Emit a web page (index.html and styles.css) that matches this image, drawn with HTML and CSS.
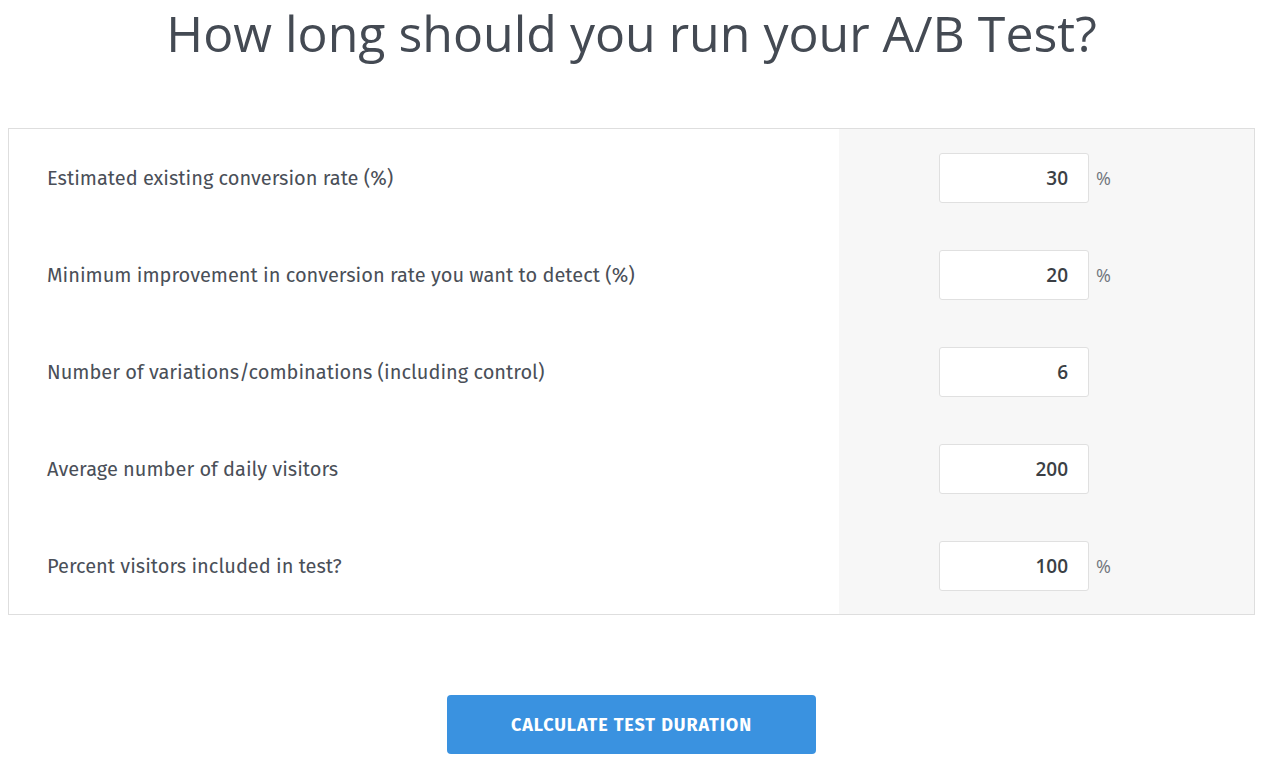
FILE: index.html
```html
<!DOCTYPE html>
<html>
<head>
<meta charset="utf-8">
<link rel="stylesheet" href="styles.css">
</head>
<body>
<h1 class="title">How long should you run your A/B Test?</h1>
<div class="calc">
  <div class="row">
    <div class="label">Estimated existing conversion rate (%)</div>
    <div class="field"><input class="num" type="text" value="30"><span class="unit">%</span></div>
  </div>
  <div class="row">
    <div class="label">Minimum improvement in conversion rate you want to detect (%)</div>
    <div class="field"><input class="num" type="text" value="20"><span class="unit">%</span></div>
  </div>
  <div class="row">
    <div class="label">Number of variations/combinations (including control)</div>
    <div class="field"><input class="num" type="text" value="6"></div>
  </div>
  <div class="row">
    <div class="label">Average number of daily visitors</div>
    <div class="field"><input class="num" type="text" value="200"></div>
  </div>
  <div class="row">
    <div class="label">Percent visitors included in test?</div>
    <div class="field"><input class="num" type="text" value="100"><span class="unit">%</span></div>
  </div>
</div>
<div class="actions">
  <button class="btn">CALCULATE TEST DURATION</button>
</div>
</body>
</html>
```

FILE: styles.css
```css
html, body {
  margin: 0;
  padding: 0;
  background: #fff;
}
body {
  padding: 0 10px 0 8px;
  font-family: "Fira Sans", "Noto Sans", "Open Sans", sans-serif;
  color: #474c54;
}
.title {
  margin: 0;
  padding-top: 4px;
  height: 128px;
  box-sizing: border-box;
  text-align: center;
  font-family: "Open Sans", sans-serif;
  font-weight: 400;
  font-size: 50px;
  line-height: 58px;
  color: #444a53;
}
.calc {
  border: 1px solid #dedede;
  background: linear-gradient(to right, #fff 0, #fff 830px, #f7f7f7 830px);
}
.row {
  display: grid;
  grid-template-columns: 830px 1fr;
  height: 97px;
}
.label {
  display: flex;
  align-items: center;
  padding-left: 38px;
  font-size: 20px;
  color: #4a4f58;
}
.field {
  display: flex;
  align-items: center;
  padding-left: 100px;
  gap: 7px;
}
.num {
  width: 150px;
  height: 50px;
  box-sizing: border-box;
  border: 1px solid #e0e0e0;
  border-radius: 3px;
  background: #fff;
  padding: 0 20px 0 10px;
  text-align: right;
  font-family: "Open Sans", sans-serif;
  font-weight: 600;
  font-size: 19px;
  color: #3b3f45;
  outline: none;
}
.unit {
  font-family: "Open Sans", sans-serif;
  font-size: 18px;
  color: #70757c;
}
.actions {
  display: flex;
  justify-content: center;
  padding-top: 80px;
}
.btn {
  width: 369px;
  height: 59px;
  border: none;
  border-radius: 4px;
  background: #3a92e0;
  color: #fff;
  font-family: "Fira Sans", "Noto Sans", sans-serif;
  font-weight: 700;
  font-size: 18px;
  letter-spacing: 0.9px;
}
```
